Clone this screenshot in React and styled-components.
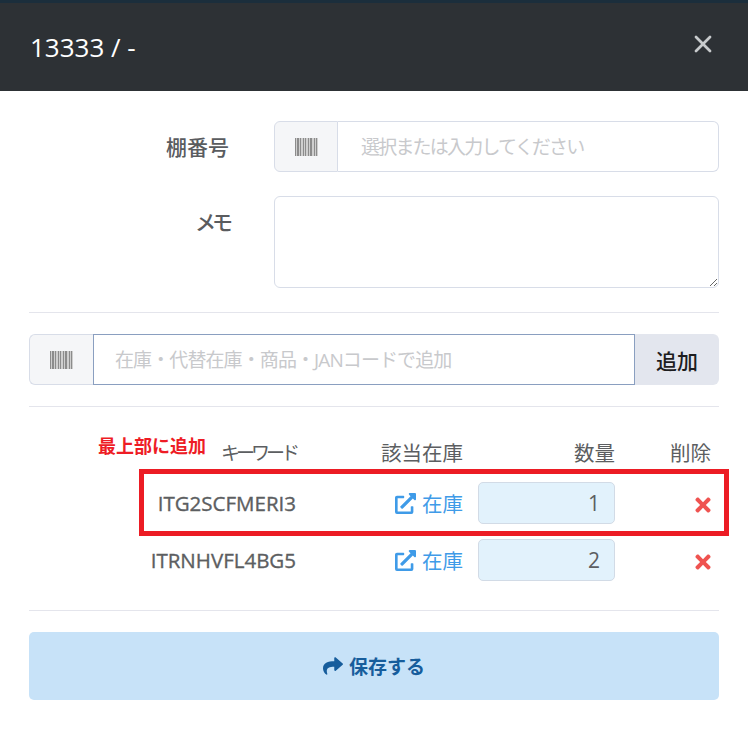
import React from "react";
import styled, { createGlobalStyle } from "styled-components";
import { FaExternalLinkAlt, FaTimes, FaShare } from "react-icons/fa";
import { X } from "lucide-react";

const FONT = `"Open Sans", "Noto Sans CJK JP", sans-serif`;

const GlobalStyle = createGlobalStyle`
  html, body {
    margin: 0;
    padding: 0;
    background: #fff;
    font-family: ${FONT};
  }
  * { box-sizing: border-box; }
  input::placeholder { color: #c8c9cc; opacity: 1; }
`;

const Modal = styled.div`
  width: 748px;
  height: 730px;
  background: #fff;
  overflow: hidden;
`;

const Header = styled.header`
  height: 91px;
  border-top: 3px solid #1b2e3c;
  background: #2d3135;
  padding: 0 31px 0 30px;
  display: flex;
  align-items: center;
  justify-content: space-between;
`;

const Title = styled.h1`
  margin: 0;
  font-size: 26px;
  font-weight: 400;
  color: #fff;
`;

const Close = styled.span`
  display: flex;
  margin: -6px 0 0 0;
  color: #c7cacc;
`;

const Body = styled.div`
  padding: 30px 29px 0;
`;

const Field = styled.div`
  display: grid;
  grid-template-columns: 200px 445px;
  column-gap: 45px;
  margin-bottom: 24px;
`;

const Label = styled.label`
  padding-top: 12px;
  text-align: right;
  font-size: 21px;
  font-weight: 500;
  line-height: 1.4;
  letter-spacing: ${(p) => p.$track || 0}px;
  color: #5a5c5f;
`;

const Group = styled.div`
  display: flex;
  height: 51px;
`;

const Addon = styled.span`
  flex: 0 0 64px;
  display: flex;
  align-items: center;
  justify-content: center;
  background: #f5f6f8;
  border: 1px solid #d8dde8;
  border-right: ${(p) => (p.$joined ? "none" : "1px solid #d8dde8")};
  border-radius: 6px 0 0 6px;
`;

const TextInput = styled.input`
  flex: 1;
  min-width: 0;
  padding: 0 ${(p) => (p.$focused ? 21 : 23)}px;
  border: 1px solid ${(p) => (p.$focused ? "#8a9fc0" : "#d8dde8")};
  border-left-width: ${(p) => (p.$focused ? 1 : 0)}px;
  border-radius: ${(p) => (p.$focused ? "0" : "0 6px 6px 0")};
  outline: none;
  font-family: ${FONT};
  font-size: 19px;
  letter-spacing: ${(p) => p.$track || 0}px;
  background: #fff;
`;

const Memo = styled.textarea`
  display: block;
  width: 445px;
  height: 92px;
  border: 1px solid #d8dde8;
  border-radius: 6px;
  outline: none;
  font-family: ${FONT};
`;

const AddButton = styled.button`
  flex: 0 0 84px;
  border: none;
  border-radius: 0 6px 6px 0;
  background: #e3e6ee;
  color: #1d1d1f;
  font-family: ${FONT};
  font-size: 21px;
  font-weight: 500;
  padding: 0;
`;

const Rule = styled.hr`
  margin: 0;
  border: none;
  border-top: 1px solid #e4e5ec;
`;

const AddSection = styled.div`
  padding: 21px 0;
`;

const Table = styled.div`
  position: relative;
  padding: 28px 0 14px;
`;

const Row = styled.div`
  display: grid;
  grid-template-columns: 267px 152px 137px 81px;
  column-gap: 15px;
  align-items: center;
  height: ${(p) => (p.$head ? 33 : 42)}px;
  margin-bottom: ${(p) => (p.$head ? 14 : 15)}px;
  font-size: 20.5px;
  color: #5c5e61;
`;

const Cell = styled.div`
  text-align: right;
  white-space: nowrap;
`;

const KanaCell = styled(Cell)`
  font-size: 19px;
  letter-spacing: -4px;
`;

const Code = styled(Cell)`
  font-weight: 400;
  -webkit-text-stroke: 0.35px #5c5e61;
`;

const StockLink = styled(Cell)`
  display: flex;
  align-items: center;
  justify-content: flex-end;
  gap: 6px;
  color: #3f9be8;
`;

const Qty = styled.input`
  width: 137px;
  height: 42px;
  padding: 0 14px;
  border: 1px solid #d2dbe6;
  border-radius: 5px;
  background: #e2f2fc;
  color: #5c5e61;
  text-align: right;
  font-family: ${FONT};
  font-size: 21px;
  outline: none;
`;

const Remove = styled(Cell)`
  display: flex;
  justify-content: flex-end;
  margin: 3px -3px 0 0;
  color: #ef5350;
`;

const Note = styled.span`
  position: absolute;
  left: 69px;
  top: 29px;
  font-size: 18px;
  font-weight: 700;
  line-height: 1.2;
  color: #ee1c25;
`;

const Highlight = styled.div`
  position: absolute;
  left: 110px;
  top: 62px;
  width: 590px;
  height: 67px;
  border: 5px solid #ec1c24;
  pointer-events: none;
`;

const SaveButton = styled.button`
  display: flex;
  align-items: center;
  justify-content: center;
  gap: 6px;
  width: 100%;
  height: 68px;
  margin-top: 21px;
  border: none;
  border-radius: 5px;
  background: #c7e2f8;
  color: #175d9c;
  font-family: ${FONT};
  font-size: 19px;
  font-weight: 600;
`;

const items = [
  { code: "ITG2SCFMERI3", qty: 1 },
  { code: "ITRNHVFL4BG5", qty: 2 },
];

const bars = [1, 1, 2, 1, 1, 2, 1, 1, 1, 2, 1, 1, 2, 2, 1, 1, 1, 2];

function Barcode() {
  let x = 0;
  return (
    <svg width="23" height="18" viewBox="0 0 23 18" shapeRendering="crispEdges">
      {bars.map((w, i) => {
        const bar = <rect key={i} x={x} width={w} height="18" fill={i % 2 ? "#cfcfcf" : "#8c8c8c"} />;
        x += w;
        return bar;
      })}
    </svg>
  );
}

export default function App() {
  return (
    <Modal>
      <GlobalStyle />
      <Header>
        <Title>13333 / -</Title>
        <Close>
          <X size={28} strokeWidth={2.4} />
        </Close>
      </Header>
      <Body>
        <Field>
          <Label>棚番号</Label>
          <Group>
            <Addon>
              <Barcode />
            </Addon>
            <TextInput $track={-1.8} placeholder="選択または入力してください" />
          </Group>
        </Field>
        <Field>
          <Label $track={-4}>メモ</Label>
          <Memo />
        </Field>
        <Rule />
        <AddSection>
          <Group>
            <Addon $joined>
              <Barcode />
            </Addon>
            <TextInput $focused $track={-0.9} placeholder="在庫・代替在庫・商品・JANコードで追加" />
            <AddButton>追加</AddButton>
          </Group>
        </AddSection>
        <Rule />
        <Table>
          <Note>最上部に追加</Note>
          <Row $head>
            <KanaCell>キーワード</KanaCell>
            <Cell>該当在庫</Cell>
            <Cell>数量</Cell>
            <Cell>削除</Cell>
          </Row>
          {items.map((item) => (
            <Row key={item.code}>
              <Code>{item.code}</Code>
              <StockLink>
                <FaExternalLinkAlt size={21} />
                在庫
              </StockLink>
              <Qty defaultValue={item.qty} />
              <Remove>
                <FaTimes size={22} />
              </Remove>
            </Row>
          ))}
          <Highlight />
        </Table>
        <Rule />
        <SaveButton>
          <FaShare size={20} />
          保存する
        </SaveButton>
      </Body>
    </Modal>
  );
}
